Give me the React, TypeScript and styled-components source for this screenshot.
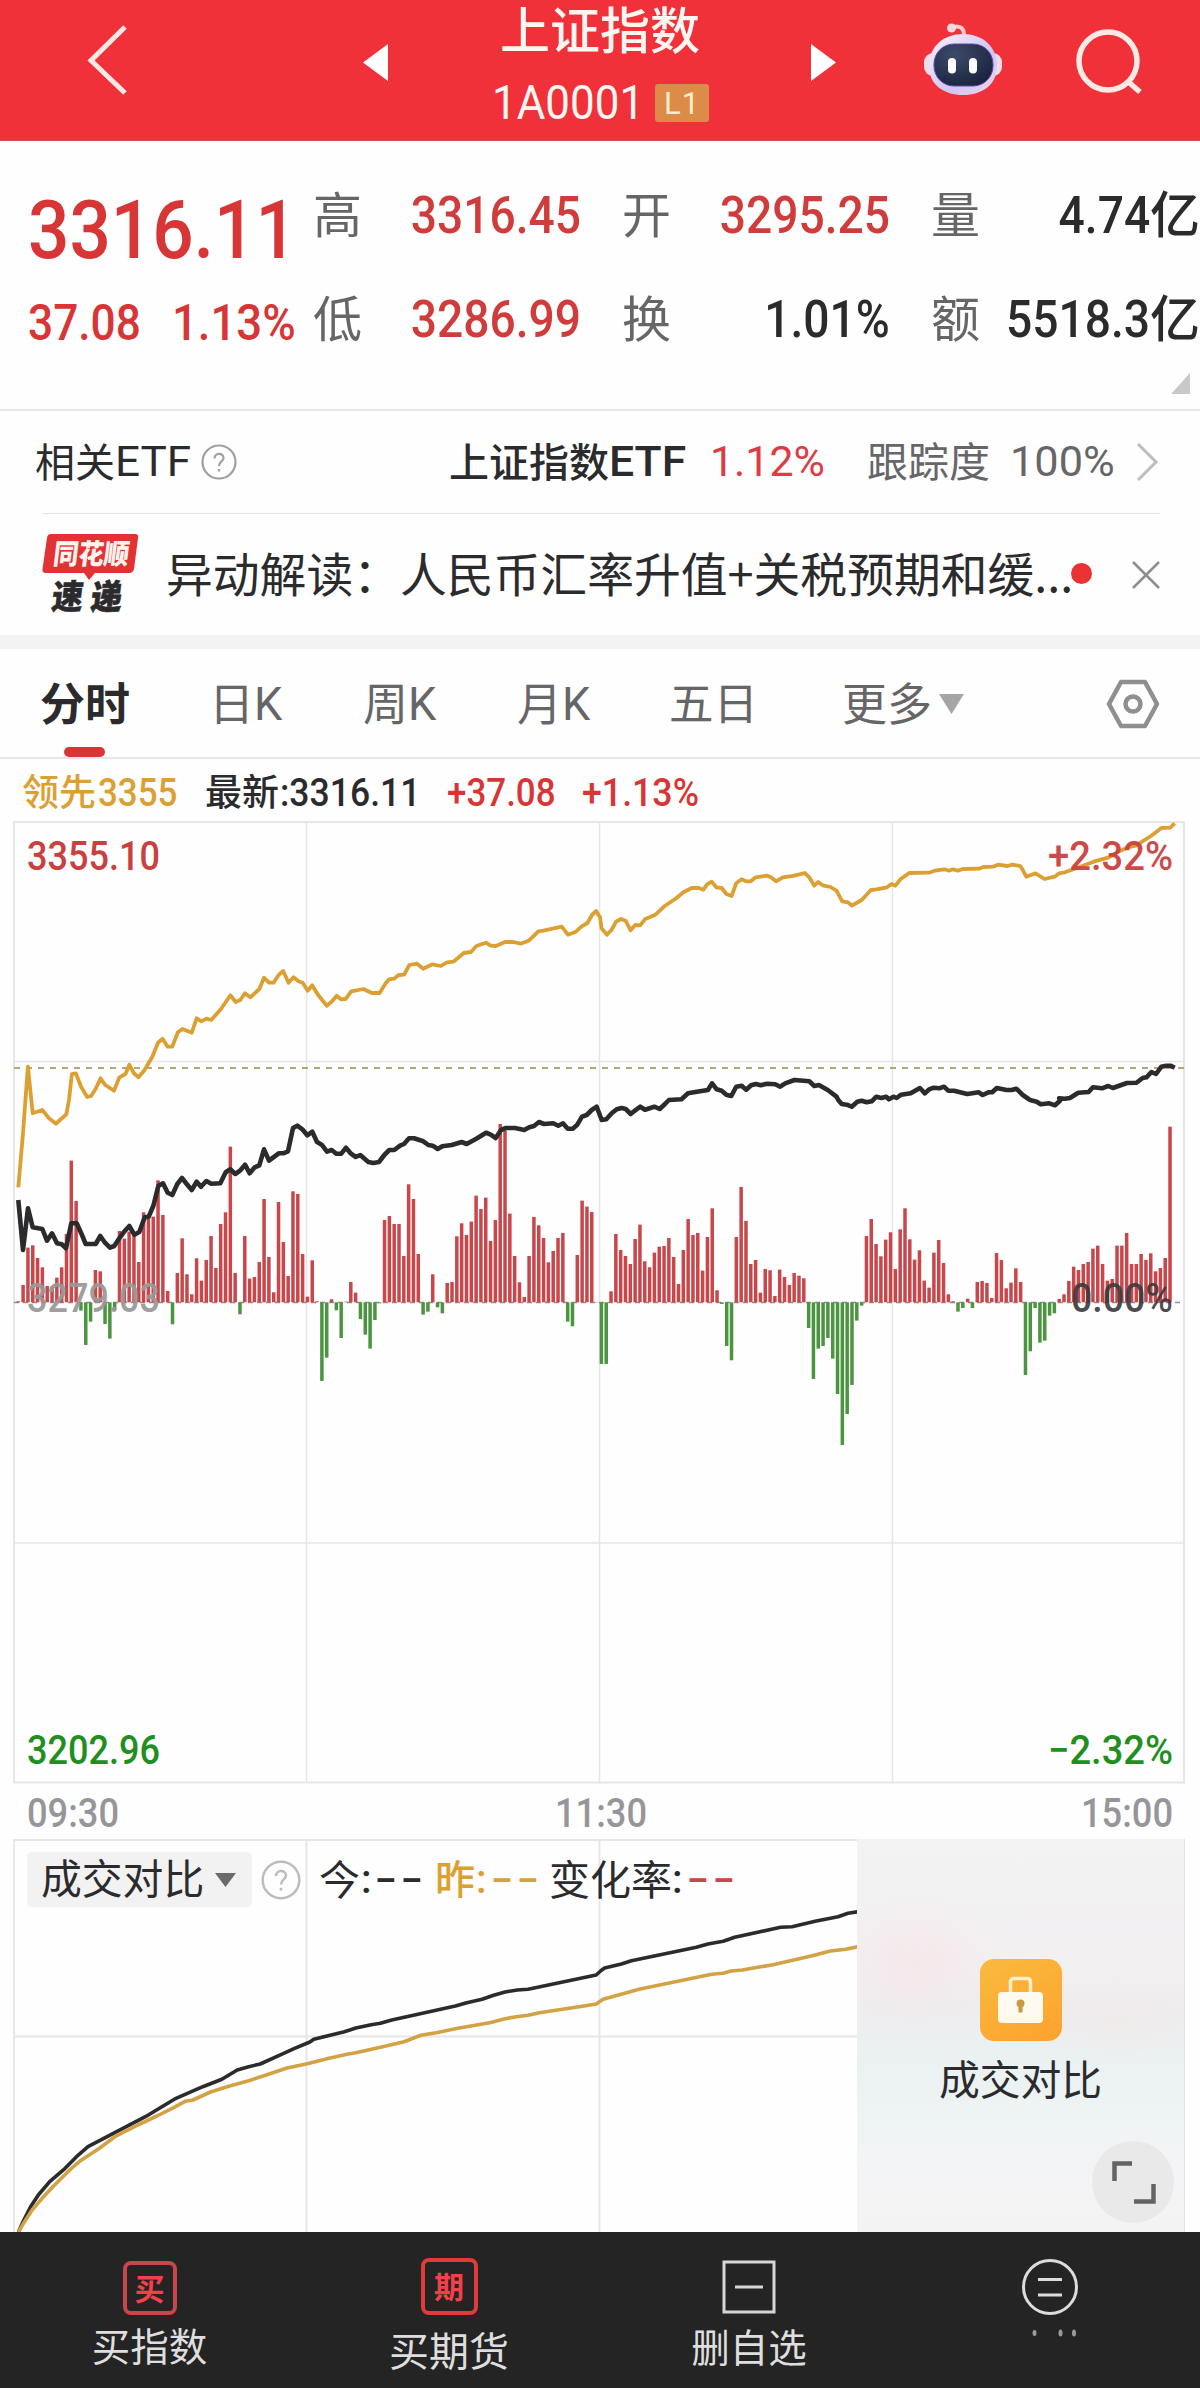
import React from "react";
import styled, { createGlobalStyle } from "styled-components";

const HAN = '"Noto Sans CJK SC", "Noto Sans", sans-serif';
const NUM = 'Roboto, "Noto Sans CJK SC", sans-serif';

const C = {
  brand: "#f03139",
  red: "#d83636",
  green: "#1f8f1f",
  gold: "#dca032",
  ink: "#2b2b2d",
  grey: "#666668",
  faint: "#96969a",
  line: "#e6e6e8",
  barRed: "#c9474b",
  barGreen: "#4b9440",
};

const GlobalStyle = createGlobalStyle`
  html, body { margin: 0; padding: 0; background: #fefefe; }
  * { box-sizing: border-box; }
`;

const Screen = styled.main`
  width: 1200px;
  height: 2388px;
  overflow: hidden;
  display: flex;
  flex-direction: column;
  background: #fefefe;
  color: ${C.ink};
  font-family: ${HAN};
`;

type FigProps = { $size: number; $fit?: number; $from?: "left" | "right" | "center"; $color?: string; $weight?: number };

const Fig = styled.span<FigProps>`
  display: inline-block;
  white-space: pre;
  font-family: ${NUM};
  font-size: ${(p) => p.$size}px;
  line-height: 1;
  font-weight: ${(p) => p.$weight ?? 500};
  color: ${(p) => p.$color ?? "inherit"};
  transform: scaleX(${(p) => p.$fit ?? 0.9});
  transform-origin: ${(p) => p.$from ?? "left"} center;
`;

const Dashes = styled(Fig)`
  letter-spacing: 2.5px;
`;

const Han = styled.span<{ $size: number; $weight?: number; $color?: string }>`
  display: inline-block;
  white-space: pre;
  font-size: ${(p) => p.$size}px;
  line-height: 1;
  margin: -0.055em 0 0.055em;
  font-weight: ${(p) => p.$weight ?? 400};
  color: ${(p) => p.$color ?? "inherit"};
`;

/* ---------- header ---------- */
const Header = styled.header`
  height: 141px;
  flex: none;
  background: ${C.brand};
  border-bottom: 1px solid #cf4a4c;
  color: #fff6f2;
  display: grid;
  grid-template-columns: 355px 490px 355px;
`;
const HeaderSide = styled.div`
  display: flex;
  svg { display: block; }
`;
const HeaderTools = styled(HeaderSide)`
  padding: 17px 0 0 75px;
`;
const TitleBlock = styled.div`
  width: 410px;
  display: flex;
  flex-direction: column;
  align-items: center;
  padding-top: 5px;
`;
const CodeRow = styled.div`
  display: grid;
  grid-template-columns: 163px 54px;
  align-items: center;
  height: 38px;
  margin: 24px 0 0 1px;
`;
const Level = styled.span`
  height: 38px;
  display: flex;
  align-items: center;
  justify-content: center;
  border-radius: 3px;
  background: #dd8b48;
  color: #ffeccb;
  font: 400 31px/1 ${NUM};
  letter-spacing: 1px;
`;

/* ---------- quote ---------- */
const Quote = styled.section`
  height: 268px;
  flex: none;
  display: grid;
  grid-template-columns: 285px 887px;
  padding-left: 28px;
`;
const PriceColumn = styled.div`
  display: flex;
  flex-direction: column;
  padding-top: 49px;
  color: ${C.red};
`;
const ChangeRow = styled.div`
  display: grid;
  grid-template-columns: 144px 1fr;
  margin-top: 27px;
`;
const StatColumn = styled.div`
  display: flex;
  flex-direction: column;
`;
const Stats = styled.div`
  display: grid;
  grid-template-columns: 268px 268px 269px;
  column-gap: 41px;
  grid-auto-rows: 104px;
  padding-top: 21px;
`;
const Stat = styled.div`
  display: flex;
  justify-content: space-between;
  align-items: center;
  height: 100%;
`;
const StatValue = styled.div<{ $hot?: boolean }>`
  display: flex;
  justify-content: flex-end;
  align-items: center;
  color: ${(p) => (p.$hot ? "#d03c3c" : C.ink)};
  padding-top: 3px;
`;
const Unit = styled(Han)`
  padding-bottom: 3px;
`;
const Corner = styled.svg`
  align-self: flex-end;
  margin-right: 9px;
  margin-top: 3px;
`;

/* ---------- ETF and news ---------- */
const EtfRow = styled.section`
  height: 104px;
  flex: none;
  display: grid;
  grid-template-columns: 80px 86px 248px 160px 101px 157px 143px 126px 64px;
  align-items: center;
  padding-left: 35px;
  border-top: 2px solid ${C.line};
`;
const Inset = styled.div`
  height: 1px;
  flex: none;
  margin: 0 40px 0 42px;
  background: ${C.line};
`;
const NewsRow = styled.section`
  height: 121px;
  flex: none;
  display: grid;
  grid-template-columns: 126px 902px 64px 60px;
  align-items: center;
  padding-left: 40px;
`;
const Headline = styled.div`
  display: flex;
  align-items: center;
`;
const Dot = styled.i`
  width: 21px;
  height: 21px;
  margin: -2px 0 0 3px;
  border-radius: 50%;
  background: #e93330;
`;
const Band = styled.div`
  height: 14px;
  flex: none;
  background: #f3f3f4;
`;

/* ---------- tabs ---------- */
const Tabs = styled.nav`
  height: 110px;
  flex: none;
  display: grid;
  grid-template-columns: 169px 154px 154px 152px 173px 264px 60px;
  padding-left: 40px;
  border-bottom: 2px solid ${C.line};
`;
const Tab = styled.div<{ $active?: boolean }>`
  display: flex;
  flex-direction: column;
  justify-content: space-between;
  padding-top: 32px;
  color: ${(p) => (p.$active ? C.ink : C.grey)};
`;
const ToolTab = styled(Tab)`
  padding-top: 30px;
`;
const TabLabel = styled.div`
  display: flex;
  align-items: center;
  height: 45px;
`;
const Underline = styled.i`
  width: 41px;
  height: 10px;
  margin-left: 24px;
  border-radius: 5px;
  background: ${C.red};
`;

/* ---------- chart ---------- */
const Legend = styled.div`
  height: 62px;
  flex: none;
  display: grid;
  grid-template-columns: 76px 107px 75px 167px 135px 200px;
  align-items: center;
  padding: 6px 0 0 22px;
`;
const ChartArea = styled.section`
  height: 1018px;
  flex: none;
  svg { display: block; }
  text { font-family: ${NUM}; font-weight: 500; }
`;

/* ---------- comparison ---------- */
const Compare = styled.section`
  height: 393px;
  flex: none;
  display: grid;
  grid-template-columns: 857px 328px;
`;
const ComparePlot = styled.div`
  position: relative;
`;
const PlotSvg = styled.svg`
  display: block;
`;
const CompareBar = styled.div`
  position: absolute;
  left: 27px;
  top: 13px;
  height: 55px;
  display: grid;
  grid-template-columns: 234px 58px 42px 14px 60px 41px 15px 58px 123px 15px 50px;
  align-items: center;
`;
const Picker = styled.div`
  width: 225px;
  height: 55px;
  display: flex;
  align-items: center;
  gap: 11px;
  padding-left: 14px;
  border-radius: 5px;
  background: #f2f2f3;
`;
const Locked = styled.div`
  display: flex;
  flex-direction: column;
  align-items: center;
  padding-top: 120px;
  border-right: 1px solid #e2e2e4;
  background:
    radial-gradient(ellipse 90px 70px at 18% 31%, rgba(247, 228, 231, 0.65), transparent),
    radial-gradient(ellipse 90px 40px at 80% 46%, rgba(246, 230, 228, 0.4), transparent),
    linear-gradient(#f3f3f4 0%, #f2eff1 34%, #eeedef 44%, #eaf1f1 56%, #eef4f4 70%, #f3f4f6 82%, #f4f3f4 100%);
`;
const LockBadge = styled.div`
  width: 82px;
  height: 82px;
  border-radius: 14px;
  background: linear-gradient(150deg, #fbba3e, #fca22f);
`;
const LockedLabel = styled.div`
  display: flex;
  align-items: center;
  margin-top: 20px;
  height: 40px;
`;
const Expand = styled.button`
  align-self: flex-end;
  width: 82px;
  height: 82px;
  margin: 40px 10px 0 0;
  padding: 0;
  border: 0;
  border-radius: 50%;
  background: #e9e9ea;
`;

/* ---------- bottom bar ---------- */
const BottomBar = styled.nav`
  height: 156px;
  flex: none;
  display: grid;
  grid-template-columns: 299px 300px 300px 302px;
  background: #242424;
  color: #dedede;
`;
const Action = styled.div<{ $top: number; $gap: number }>`
  display: flex;
  flex-direction: column;
  align-items: center;
  padding-top: ${(p) => p.$top}px;
  gap: ${(p) => p.$gap}px;
`;
const Stamp = styled.div<{ $size: number; $color: string }>`
  width: ${(p) => p.$size}px;
  height: ${(p) => p.$size}px;
  display: flex;
  align-items: center;
  justify-content: center;
  padding-bottom: 3px;
  border: 4px solid ${(p) => p.$color};
  border-radius: 8px;
  color: #f3404b;
  font: 700 30px/1 ${HAN};
`;

/* ---------- data ---------- */
type Pt = [number, number];
const parse = (s: string): Pt[] => s.trim().split(/\s+/).map((p) => p.split(",").map(Number) as Pt);
const place = (s: string, ox: number, oy: number, sx: number): Pt[] =>
  parse(s).map(([x, y]) => [ox + x * sx, oy + y / 3]);
const toPoints = (pts: Pt[]) => pts.map(([x, y]) => `${x.toFixed(1)},${y.toFixed(1)}`).join(" ");

const THIRD = 1 / 3;
const WIDE = 600 / 1568;

const leadLine = toPoints([
  ...place("55,262 69,100", 0, 1100, THIRD),
  ...place("73,800", 0, 800, WIDE),
  ...place("98,40 127,30 147,55 168,71 180,60 199,43 207,0", 0, 1100, THIRD),
  ...place(
    "188,822 198,820 212,860 228,891 238,888 250,866 263,835 275,855 298,872 312,832 328,822 338,794 350,820 362,832 378,810 398,770 413,728 425,716 438,740 450,740 465,697 477,687 501,698 514,655 526,664 540,656 552,660 577,628 602,586 616,606 628,600 640,580 654,592 678,567 690,533 703,548 715,548 728,525 740,513 754,548 767,532 780,544 791,548 804,572 816,556 830,583 854,617 868,604 880,587 891,598 903,597 918,574 950,567 972,579 992,579 1008,550 1017,538 1030,536 1042,525 1056,524 1070,495 1090,491 1106,506 1130,493 1152,498 1168,487 1185,485 1212,459 1231,456 1245,438 1270,428 1282,437 1296,438 1320,426 1342,426 1360,431 1382,422 1407,394 1420,392 1468,380 1484,404 1505,395 1520,379 1535,369 1547,345 1558,333 1564,345",
    0, 800, WIDE),
  ...place(
    "0,350 4,385 18,404 30,390 42,365 55,357 67,362 80,391 92,375 105,376 117,358 145,344 170,317 200,294 218,277 240,264 258,264 270,269 280,253 292,245 304,262 318,264 330,282 344,288 356,250 370,238 382,244 394,244 407,232 437,227 447,232 460,244 478,232 508,227 535,219 547,232 560,257 570,246 582,256 602,261 618,272 633,304 648,307 658,317 684,300 708,270 722,268 750,262 762,252 772,257 785,238 808,219 860,218 875,212 900,208 912,212 922,208 935,212 948,207 990,206 1002,201 1027,200 1040,194 1065,198 1078,194 1098,198 1104,208 1114,230 1138,220 1162,237 1188,230 1200,220 1215,217 1255,200 1290,185 1330,172 1360,152 1380,142 1400,137 1440,108 1467,84 1490,83 1502,70",
    600, 800, WIDE),
]);

const indexLine = toPoints([
  ...place(
    "55,300 69,450 84,325 98,382 127,387 141,422 156,400 171,430 185,433 198,445 214,370 230,370 243,398 257,432 287,432 301,408 315,428 330,443 343,438 360,412 375,392 388,378 403,404 418,396 434,352 446,350 460,318 475,258 489,250 503,278 517,285 532,252 546,234 560,252 575,270 590,245 603,260 619,243 634,251 661,250 677,217 691,208 706,222 720,212 735,194 749,220 764,202 778,196 792,148 807,182 836,160 850,160 864,154 879,84 892,77 907,88 922,106 937,95 951,126 965,134 981,155 995,150 1009,161 1024,161 1038,143 1053,161 1067,171 1081,165 1105,186 1120,189 1137,186 1153,165 1168,150 1183,150 1200,137",
    0, 1100, THIRD),
  ...place(
    "12,132 27,115 42,115 70,124 85,135 98,137 113,147 127,139 155,135 185,126 200,132 229,116 258,98 272,104 287,114 303,90 318,84 345,84 373,90 388,82 402,78 417,66 432,72 460,70 475,77 489,70 503,86 518,86 532,74 546,50 560,45 575,30 590,20 605,60 619,58 635,40 650,28 665,24 677,27 692,42 706,31 721,20 735,29 763,20 779,27 795,12",
    400, 1100, THIRD),
  ...place(
    "180,900 213,898 230,880 245,877 282,870 293,850 305,868 318,872 330,884 343,888 356,860 370,857 382,869 395,856 407,852 420,856 437,851 458,853 471,860 484,850 508,840 547,844 560,858 572,855 595,870 618,890",
    600, 800, WIDE),
  ...place("115,0 125,12 140,14 155,20 172,5 185,2 200,7 215,4", 800, 1100, THIRD),
  ...place(
    "722,890 735,894 748,890 755,898 767,890 775,894 787,884 812,880 836,864 849,880 860,868 872,863 887,865 899,860 910,872 925,872 960,882 990,877 1000,885 1015,877 1025,877 1037,864 1062,870 1076,870 1088,866 1105,885 1120,897",
    600, 800, WIDE),
  ...place("690,0 710,5 722,13 748,10 765,16 780,2", 800, 1100, THIRD),
  ...place(
    "1200,895 1215,896 1228,894 1250,878 1277,876 1288,862 1312,865 1328,858 1340,864 1377,849 1402,848 1418,834 1428,832 1441,816 1453,822 1467,800 1480,797 1492,797 1502,803",
    600, 800, WIDE),
]);

/* One entry per minute of trading: bar end, negative for outflow. */
const BAR_BASE = 607;
const flow = [
  604, 555, 443, 436, 474, 502, 558, 560, 533, 502, 402, 182, 303, -632, -735, -665, 510, 514, -672, -716,
  -632, 393, 416, 395, 400, 486, 337, 345, 350, 241, 345, 573, -673, 519, 415, 523, 583, 475, 542, 480,
  408, 504, 372, 337, 140, 519, -643, 408, 536, 531, 486, 297, 471, 577, 306, 426, 528, 274, 282, 462,
  590, 481, 604, -843, -773, 598, -631, -714, 605, 546, 578, -657, -704, -746, -660, -610, 360, 348, 372, 372,
  468, 253, 297, 462, -644, -635, 523, -622, -640, 549, 546, 409, 370, 405, 365, 287, 327, 293, 423, 360,
  72, 93, 341, 468, 547, 591, 468, 351, 376, 414, 487, 453, 414, 399, -665, -679, 465, 302, 320, 336,
  606, -792, -792, 574, 402, 450, 468, 492, 417, 374, 484, 502, 458, 440, 438, 414, 471, 552, 450, 357,
  405, 399, 512, 411, 325, 571, -612, -738, -781, 411, 261, 363, 492, 480, 578, 507, 511, 588, 509, 531,
  555, 519, 527, 535, -684, -837, -746, -738, -714, -776, -882, -1035, -942, -855, -662, -617, 408, 357, 432, 469,
  419, 397, 507, 388, 325, 418, 479, 451, 542, 563, 458, 420, 489, 583, 604, -635, -624, 596, -624, 546,
  543, 549, 594, 459, 480, 565, 548, 505, 546, -825, -754, -624, -728, -722, -647, -640, 597, 583, 543, 500,
  510, 492, 486, 446, 437, 492, 542, 537, 437, 437, 399, 492, 492, 462, 480, 460, 514, 504, 474, 80,
];

const HALF = 1200 / 1568;
const todayLine = toPoints([
  ...place("24,576 30,545 40,500 50,465 65,425 85,385 100,350 115,320 150,278 190,230 230,175 265,140 290,118 310,90 325,80 340,72 365,46 385,25 405,6", 0, 2040, HALF),
  ...place("410,1018 450,995 465,984 485,974 497,970 512,960 595,918 610,908 630,898 645,886 660,876 676,870 690,868 779,825 785,812 790,804 812,792 825,782 910,742 925,732 945,724 960,712 1020,682 1035,680 1065,664 1095,650 1108,640 1121,635", 0, 1700, HALF),
]);
const yesterdayLine = toPoints([
  ...place("24,576 32,545 42,510 55,475 70,438 90,392 105,362 130,325 150,290 180,255 205,228 225,205 242,184 252,180 275,156 300,138 325,122 345,107 375,84 400,72 430,55 455,42 465,38 500,20 528,5", 0, 2040, HALF),
  ...place("550,1006 570,998 600,984 640,968 660,956 675,950 690,946 705,938 765,917 779,912 788,898 800,890 835,868 930,823 945,820 955,813 970,810 990,802 1010,794 1060,768 1085,753 1105,748 1121,740", 0, 1700, HALF),
]);

/* ---------- drawings ---------- */
const Robot = () => (
  <svg width="86" height="80" viewBox="0 0 86 80">
    <defs>
      <linearGradient id="shell" x1="0" y1="0" x2="1" y2="1">
        <stop offset="0" stopColor="#fdf0f4" />
        <stop offset="0.6" stopColor="#cfc6f4" />
        <stop offset="1" stopColor="#f2d3ea" />
      </linearGradient>
      <radialGradient id="visor" cx="0.35" cy="0.25" r="0.8">
        <stop offset="0" stopColor="#3d4a68" />
        <stop offset="1" stopColor="#1a2440" />
      </radialGradient>
    </defs>
    <path d="M32 10C40 8 44 11 44 18" fill="none" stroke="#f9cdd2" strokeWidth="4" />
    <circle cx="31.500" cy="11" r="4.500" fill="#fbd8dc" />
    <rect x="4" y="36" width="78" height="23" rx="9" fill="#f3dcea" />
    <path d="M43 17C62 17 77 29 77 49C77 68 62 78 43 78C24 78 9 68 9 49C9 29 24 17 43 17Z" fill="url(#shell)" />
    <rect x="14" y="27" width="59" height="42" rx="20" fill="url(#visor)" stroke="#5b4bb0" strokeWidth="1" />
    <rect x="28" y="41" width="8" height="15.500" rx="4" fill="#fff" />
    <rect x="49" y="41" width="8" height="15.500" rx="4" fill="#fff" />
  </svg>
);

const QuestionMark = ({ size, stroke }: { size: number; stroke: string }) => (
  <svg width={size} height={size} viewBox="0 0 36 36" fill="none" stroke={stroke} strokeWidth="2.200">
    <circle cx="18" cy="18" r="16.500" />
    <path d="M13.500 14.500C13.500 8.500 22.500 8.500 22.500 14C22.500 17.500 18 17.500 18 22" />
    <path d="M18 25V27.500" />
  </svg>
);

const BrandMark = () => (
  <svg width="104" height="84" viewBox="0 0 104 84" overflow="visible">
    <path d="M11 1H95Q99 1 98 5L94 36Q93 40 89 40H55L49 47L44 40H6Q2 40 2.500 36L7 5Q7.500 1 11 1Z" fill="#e23233" />
    <text x="50" y="31" textAnchor="middle" textLength="76" lengthAdjust="spacingAndGlyphs" fill="#fff3ee" fontFamily={HAN} fontWeight="900" fontSize="28" transform="translate(4 0) skewX(-7)">同花顺</text>
    <g transform="translate(9 0) skewX(-7)" fill="#2b2b2d" fontFamily={HAN} fontWeight="900" fontSize="34">
      <text x="11" y="76" textLength="31" lengthAdjust="spacingAndGlyphs" stroke="#2b2b2d" strokeWidth="0.6">速</text>
      <text x="50" y="76" textLength="31" lengthAdjust="spacingAndGlyphs" stroke="#2b2b2d" strokeWidth="0.6">递</text>
    </g>
  </svg>
);

const MainChart = () => (
  <svg width="1200" height="1018" viewBox="0 821 1200 1018">
    <g stroke={C.line} strokeWidth="2" fill="none">
      <rect x="14" y="822" width="1170" height="960.500" />
      <path d="M306.500 822V1782M599.500 822V1782M892.500 822V1782M14 1061.500H1184M14 1543H1184" strokeWidth="1.500" />
    </g>
    <path d="M14 1068H1184" stroke="#b3a978" strokeWidth="2" strokeDasharray="6 6" />
    <path d="M14 1302.500H1184" stroke="#8f8f8f" strokeWidth="1.500" strokeDasharray="5 4" />
    <g>
      {flow.map((v, i) => {
        const h = (BAR_BASE - Math.abs(v)) / 3;
        return (
          <rect
            key={i}
            x={(18.3 + i * 4.819 - 1.75).toFixed(2)}
            y={v > 0 ? 1302.3 - h : 1302.3}
            width="3.500"
            height={Math.abs(h)}
            fill={v > 0 ? C.barRed : C.barGreen}
          />
        );
      })}
    </g>
    <polyline points={leadLine} fill="none" stroke={C.gold} strokeWidth="3.800" strokeLinejoin="round" />
    <polyline points={indexLine} fill="none" stroke={C.ink} strokeWidth="4.600" strokeLinejoin="round" />
    <g fontSize="40">
      <text x="27" y="869.500" textLength="133" lengthAdjust="spacingAndGlyphs" fill="#c9403f">3355.10</text>
      <text x="1048" y="869.500" textLength="125" lengthAdjust="spacingAndGlyphs" fill="#c9403f" fillOpacity="0.95">+2.32%</text>
      <text x="27" y="1311.500" textLength="133" lengthAdjust="spacingAndGlyphs" fill="#999" fillOpacity="0.95">3279.03</text>
      <text x="1071" y="1311.500" textLength="102" lengthAdjust="spacingAndGlyphs" fill="#3a3a3e" fillOpacity="0.92">0.00%</text>
      <text x="27" y="1764" textLength="133" lengthAdjust="spacingAndGlyphs" fill={C.green}>3202.96</text>
      <text x="1048" y="1764" textLength="125" lengthAdjust="spacingAndGlyphs" fill={C.green}>−2.32%</text>
    </g>
    <g fontSize="40" fill={C.faint}>
      <text x="27" y="1827" textLength="92" lengthAdjust="spacingAndGlyphs">09:30</text>
      <text x="555" y="1827" textLength="92" lengthAdjust="spacingAndGlyphs">11:30</text>
      <text x="1081" y="1827" textLength="92" lengthAdjust="spacingAndGlyphs">15:00</text>
    </g>
  </svg>
);

/* ---------- screen ---------- */
const stats: { label: string; value: string; unit?: string; hot?: boolean }[] = [
  { label: "高", value: "3316.45", hot: true },
  { label: "开", value: "3295.25", hot: true },
  { label: "量", value: "4.74", unit: "亿" },
  { label: "低", value: "3286.99", hot: true },
  { label: "换", value: "1.01%" },
  { label: "额", value: "5518.3", unit: "亿" },
];

export default function App() {
  return (
    <>
      <GlobalStyle />
      <Screen>
        <Header>
          <HeaderSide>
            <svg width="355" height="140" fill="none" stroke="#ffe9e4" strokeWidth="5">
              <path d="M125 27L91 60.500L125 93" />
            </svg>
          </HeaderSide>
          <HeaderSide>
            <svg width="40" height="140"><path d="M8 62.500L33 44V81Z" fill="#fff" /></svg>
            <TitleBlock>
              <Han $size={50} $weight={500}>上证指数</Han>
              <CodeRow>
                <Fig $size={48} $fit={0.915} $weight={400}>1A0001</Fig>
                <Level>L1</Level>
              </CodeRow>
            </TitleBlock>
            <svg width="40" height="140"><path d="M31 62.500L6 44V81Z" fill="#fff" /></svg>
          </HeaderSide>
          <HeaderTools>
            <Robot />
            <svg width="160" height="90" viewBox="1006 17 160 90" fill="none" stroke="#ffe9e4" strokeWidth="5.500">
              <circle cx="1108" cy="61" r="29" />
              <path d="M1128.500 82L1140 92" />
            </svg>
          </HeaderTools>
        </Header>

        <Quote>
          <PriceColumn>
            <Fig $size={81} $fit={0.9}>3316.11</Fig>
            <ChangeRow>
              <Fig $size={50} $fit={0.885}>37.08</Fig>
              <Fig $size={50} $fit={0.91}>1.13%</Fig>
            </ChangeRow>
          </PriceColumn>
          <StatColumn>
            <Stats>
              {stats.map((s) => (
                <Stat key={s.label}>
                  <Han $size={49} $color={C.grey}>{s.label}</Han>
                  <StatValue $hot={s.hot}>
                    <Fig $size={51} $fit={0.905} $from="right">{s.value}</Fig>
                    {s.unit && <Unit $size={50} $weight={500}>{s.unit}</Unit>}
                  </StatValue>
                </Stat>
              ))}
            </Stats>
            <Corner width="20" height="22"><path d="M19 0V21H0Z" fill="#c9c9cb" /></Corner>
          </StatColumn>
        </Quote>

        <EtfRow>
          <Han $size={40}>相关</Han>
          <Fig $size={42} $fit={1.05} $weight={400}>ETF</Fig>
          <QuestionMark size={36} stroke="#a0a0a3" />
          <Han $size={40} $weight={500}>上证指数</Han>
          <Fig $size={42} $fit={1.06}>ETF</Fig>
          <Fig $size={42} $fit={1.02} $weight={400} $color="#dc3c46">1.12%</Fig>
          <Han $size={41} $color={C.grey}>跟踪度</Han>
          <Fig $size={42} $fit={1.03} $weight={400} $color={C.grey}>100%</Fig>
          <svg width="24" height="40" fill="none" stroke="#bdbdc0" strokeWidth="3"><path d="M2 2L20 20L2 38" /></svg>
        </EtfRow>
        <Inset />

        <NewsRow>
          <BrandMark />
          <Headline>
            <Han $size={46.8}>异动解读：人民币汇率升值+关税预期和缓...</Han>
          </Headline>
          <Dot />
          <svg width="28" height="28" stroke="#8d8d90" strokeWidth="2.500"><path d="M1 1L27 27M27 1L1 27" /></svg>
        </NewsRow>
        <Band />

        <Tabs>
          <Tab $active>
            <TabLabel><Han $size={45} $weight={700}>分时</Han></TabLabel>
            <Underline />
          </Tab>
          {["日", "周", "月"].map((t) => (
            <Tab key={t}>
              <TabLabel><Han $size={45}>{t}</Han><Fig $size={46} $fit={0.98} $weight={400}>K</Fig></TabLabel>
            </Tab>
          ))}
          <Tab><TabLabel><Han $size={44.5}>五日</Han></TabLabel></Tab>
          <Tab>
            <TabLabel>
              <Han $size={45}>更多</Han>
              <svg width="34" height="22"><path d="M7 1H32L19.500 21Z" fill="#a5a5a8" /></svg>
            </TabLabel>
          </Tab>
          <ToolTab>
            <svg width="54" height="50" viewBox="0 0 54 50" fill="none" stroke="#8f8f92" strokeWidth="4.500">
              <path d="M15 3H39L51 25L39 47H15L3 25Z" strokeLinejoin="round" />
              <circle cx="27" cy="25" r="7.500" />
            </svg>
          </ToolTab>
        </Tabs>

        <Legend>
          <Han $size={37} $color={C.gold} $weight={500}>领先</Han>
          <Fig $size={38} $fit={0.92} $color={C.gold}>3355</Fig>
          <Han $size={37} $weight={500}>最新</Han>
          <Fig $size={38} $fit={0.935}>:3316.11</Fig>
          <Fig $size={38} $fit={0.92} $color={C.red}>+37.08</Fig>
          <Fig $size={38} $fit={0.94} $color={C.red}>+1.13%</Fig>
        </Legend>
        <ChartArea><MainChart /></ChartArea>

        <Compare>
          <ComparePlot>
            <PlotSvg width="857" height="393" viewBox="0 1839 857 393">
              <path d="M857 1840H14V2232M306.500 1840V2232M599.500 1840V2232M14 2036.500H857" fill="none" stroke={C.line} strokeWidth="1.800" />
              <polyline points={todayLine} fill="none" stroke={C.ink} strokeWidth="3.600" strokeLinejoin="round" />
              <polyline points={yesterdayLine} fill="none" stroke="#d2a245" strokeWidth="3.600" strokeLinejoin="round" />
            </PlotSvg>
            <CompareBar>
              <Picker>
                <Han $size={40.8}>成交对比</Han>
                <svg width="21" height="14"><path d="M0 0H21L10.500 14Z" fill="#6b6b6e" /></svg>
              </Picker>
              <QuestionMark size={40} stroke="#bcbcbf" />
              <Han $size={41}>今</Han>
              <Fig $size={40} $fit={1}>:</Fig>
              <Dashes $size={40} $fit={1.62}>--</Dashes>
              <Han $size={40} $weight={500} $color={C.gold}>昨</Han>
              <Fig $size={40} $fit={1} $color={C.gold}>:</Fig>
              <Dashes $size={40} $fit={1.62} $color="#d2a245">--</Dashes>
              <Han $size={41}>变化率</Han>
              <Fig $size={40} $fit={1}>:</Fig>
              <Dashes $size={40} $fit={1.62} $color="#c8474b">--</Dashes>
            </CompareBar>
          </ComparePlot>
          <Locked>
            <LockBadge>
              <svg width="82" height="82" viewBox="0 0 82 82">
                <path d="M30.500 35V23Q30.500 19.500 34 19.500H47Q50.500 19.500 50.500 23V35" fill="none" stroke="#fff0cc" strokeWidth="3.500" />
                <rect x="18" y="33" width="45" height="31" rx="4" fill="#fffaf0" />
                <circle cx="40.500" cy="44.500" r="4" fill="#c99a45" />
                <path d="M38.500 45H42.500V53.500H38.500Z" fill="#c99a45" />
              </svg>
            </LockBadge>
            <LockedLabel><Han $size={40.8}>成交对比</Han></LockedLabel>
            <Expand aria-label="展开">
              <svg width="82" height="82" fill="none" stroke="#636364" strokeWidth="4.500">
                <path d="M22.500 40V22.500H40M61.500 43V60.500H42" />
              </svg>
            </Expand>
          </Locked>
        </Compare>

        <BottomBar>
          <Action $top={29} $gap={12}>
            <Stamp $size={54} $color="#c8474b">买</Stamp>
            <Han $size={38.5}>买指数</Han>
          </Action>
          <Action $top={26} $gap={16}>
            <Stamp $size={57} $color="#e33a3a">期</Stamp>
            <Han $size={40}>买期货</Han>
          </Action>
          <Action $top={28} $gap={14}>
            <svg width="54" height="54" fill="none" stroke="#d6d6d6" strokeWidth="3">
              <rect x="2" y="2" width="50" height="50" />
              <path d="M13 27H41" />
            </svg>
            <Han $size={38.5}>删自选</Han>
          </Action>
          <Action $top={27} $gap={13}>
            <svg width="58" height="80" fill="none" stroke="#dcdcdc" strokeWidth="3">
              <circle cx="29" cy="28" r="26.500" />
              <path d="M17 20.500H41M17 36H41" />
              <g fill="#9a9a9a" stroke="none">
                <ellipse cx="13.500" cy="74" rx="2" ry="3" />
                <ellipse cx="39.500" cy="74" rx="2" ry="3.500" />
                <ellipse cx="53" cy="74" rx="2" ry="3.500" />
              </g>
            </svg>
          </Action>
        </BottomBar>
      </Screen>
    </>
  );
}
